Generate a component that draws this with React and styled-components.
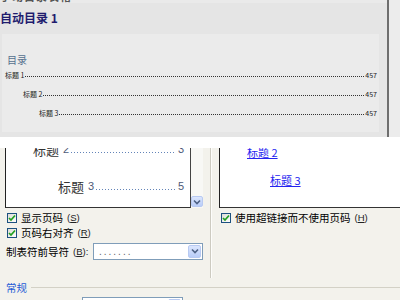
import React from "react";
import styled, { createGlobalStyle } from "styled-components";

const GlobalStyle = createGlobalStyle`
  *, *::before, *::after { box-sizing: border-box; }
  html, body { margin: 0; padding: 0; }
  body {
    width: 400px;
    height: 300px;
    overflow: hidden;
    background: #f3f2ec;
    font-family: "Noto Sans CJK SC", "Noto Sans", sans-serif;
  }
`;

//Gallery (top)
const TopPanel = styled.div`
  display: flex;
  height: 137px;
  background: #e5e5e5;
`;

const Gallery = styled.div`
  display: flex;
  flex-direction: column;
  width: 387px;
`;

const CutHeader = styled.div`
  height: 3px;
  overflow: hidden;
  background: #eaeaea;

  span {
    display: block;
    margin-top: -10px;
    font-size: 11px;
    line-height: 13px;
    font-weight: bold;
    letter-spacing: 1px;
    color: #555;
  }
`;

const GalleryTitle = styled.div`
  height: 31px;
  padding-top: 7px;
  font-size: 12px;
  line-height: 16px;
  font-weight: bold;
  color: #1f1c6e;
`;

const Preview = styled.div`
  width: 377px;
  height: 98px;
  margin-left: 2px;
  padding: 18px 2px 0 1px;
  background: #ebebeb;
`;

const PreviewHeading = styled.div`
  margin: 0 0 -2px 4px;
  font-size: 10px;
  line-height: 15px;
  color: #56708f;
`;

const PreviewEntry = styled.div`
  display: flex;
  align-items: center;
  height: 19px;
  padding-left: ${(p) => p.$indent}px;
  font-size: 7px;
  color: #222;
`;

const PreviewLeader = styled.span`
  flex: 1;
  margin: 4px 1px 0;
  border-bottom: 1px dotted #333;
`;

const Divider = styled.div`
  width: 2px;
  background: #6e6e6e;
`;

const RightStrip = styled.div`
  flex: 1;
  background: #ececec;
`;

const WhiteStrip = styled.div`
  height: 11px;
  background: #fff;
`;

//Dialog (bottom)
const Dialog = styled.div`
  background: #f3f2ec;
  font-size: 10.5px;
  color: #000;
`;

const GroupsRow = styled.div`
  display: flex;
  height: 130px;
`;

const LeftGroup = styled.div`
  width: 210px;
  padding-left: 5px;
`;

const ListRow = styled.div`
  display: flex;
  height: 60px;
`;

const ListBox = styled.div`
  width: 186px;
  height: 60px;
  overflow: hidden;
  background: #fff;
  border-left: 1px solid #222;
  border-right: 1px solid #444;
  border-bottom: 1px solid #333;
`;

const TocEntries = styled.div`
  display: flex;
  flex-direction: column;
  gap: 19px;
  margin-top: -8px;
  padding-right: 6px;
`;

const TocEntry = styled.div`
  display: flex;
  align-items: center;
  height: 18px;
  padding-left: ${(p) => p.$indent}px;
  font-size: 13px;
  color: #333;
`;

const TocNum = styled.span`
  font-family: "Liberation Sans", "DejaVu Sans", sans-serif;
  font-size: 11px;
  color: #4e5a78;
  margin-left: ${(p) => (p.$gap ? "4px" : "0")};
`;

const TocLeader = styled.span`
  flex: 1;
  height: 1px;
  margin: 7px 2px 0;
  background: repeating-linear-gradient(
    to right,
    #6384b8 0 1px,
    transparent 1px 3px
  );
`;

const ScrollBar = styled.div`
  display: flex;
  flex-direction: column;
  justify-content: flex-end;
  width: 12px;
  background: #f8f8f5;
`;

const ScrollButton = styled.div`
  display: flex;
  align-items: center;
  justify-content: center;
  width: ${(p) => p.$w || 12}px;
  height: ${(p) => p.$h || 11}px;
  margin-bottom: 1px;
  border: 1px solid #b8caf2;
  border-radius: 2px;
  background: linear-gradient(#dbe6fe, #b9cdf8);
  flex-shrink: 0;
`;

const CheckRow = styled.div`
  display: flex;
  align-items: center;
  height: 15px;
  padding-left: 2px;
  margin-top: ${(p) => p.$top || 0}px;
`;

const CheckBox = styled.span`
  display: flex;
  align-items: center;
  justify-content: center;
  width: 10px;
  height: 10px;
  margin-right: 4px;
  border: 1px solid #1c5180;
  background: linear-gradient(135deg, #dcdcd5, #fff);
  flex-shrink: 0;
`;

const Key = styled.span`
  margin-left: 4px;
  font-family: "Liberation Sans", "DejaVu Sans", sans-serif;
  font-size: 9.5px;
  color: #222;
`;

const LeaderRow = styled.div`
  display: flex;
  align-items: center;
  height: 17px;
  margin-top: 3px;
  padding-left: 1px;
`;

const Select = styled.div`
  display: flex;
  align-items: center;
  width: ${(p) => p.$w}px;
  height: ${(p) => p.$h || 17}px;
  margin-left: ${(p) => (p.$auto ? "auto" : "0")};
  margin-right: ${(p) => p.$right || 0}px;
  padding: 1px;
  border: 1px solid #7f9db9;
  background: #fff;
`;

const SelectDots = styled.span`
  flex: 1;
  padding-left: 4px;
  font-family: "Liberation Sans", sans-serif;
  font-size: 10px;
  letter-spacing: 2px;
  color: #666;
  line-height: 10px;
`;

const Separator = styled.div`
  width: 2px;
  border-left: 1px solid #cdcbc1;
  border-right: 1px solid #fdfdfb;
`;

const RightGroup = styled.div`
  flex: 1;
  padding-left: 7px;
`;

const WebBox = styled.div`
  height: 60px;
  overflow: hidden;
  background: #fff;
  border-left: 1px solid #222;
  border-bottom: 1px solid #333;
`;

const WebLinks = styled.div`
  display: flex;
  flex-direction: column;
  gap: 12px;
  margin-top: -4px;
`;

const WebLink = styled.a`
  padding-left: ${(p) => p.$indent}px;
  font-size: 11px;
  line-height: 16px;
  color: #2424f0;
  text-decoration: underline;
`;

const GeneralHeader = styled.div`
  display: flex;
  align-items: center;
  height: 19px;
  padding-left: 6px;
`;

const GeneralLabel = styled.span`
  color: #1f5bd6;
`;

const Rule = styled.span`
  flex: 1;
  height: 1px;
  margin-left: 4px;
  background: #d3d1c6;
`;

const FormatRow = styled.div`
  padding-left: 82px;
`;

const Check = () => (
  <CheckBox>
    <svg width="8" height="8" viewBox="0 0 8 8">
      <path d="M1 4 L3 6 L7 1.5" fill="none" stroke="#21a121" strokeWidth="1.7" />
    </svg>
  </CheckBox>
);

const Chevron = () => (
  <svg width="8" height="6" viewBox="0 0 8 6">
    <path d="M1 1.5 L4 4.5 L7 1.5" fill="none" stroke="#4d6185" strokeWidth="1.6" />
  </svg>
);

const previewEntries = [
  { label: "标题 1", indent: 2 },
  { label: "标题 2", indent: 20 },
  { label: "标题 3", indent: 36 },
];

const App = () => {
  return (
    <>
      <GlobalStyle />
      <TopPanel>
        <Gallery>
          <CutHeader>
            <span>手动目录表格 ▪</span>
          </CutHeader>
          <GalleryTitle>自动目录 1</GalleryTitle>
          <Preview>
            <PreviewHeading>目录</PreviewHeading>
            {previewEntries.map((e) => (
              <PreviewEntry key={e.label} $indent={e.indent}>
                {e.label}
                <PreviewLeader />
                457
              </PreviewEntry>
            ))}
          </Preview>
        </Gallery>
        <Divider />
        <RightStrip />
      </TopPanel>
      <WhiteStrip />

      <Dialog>
        <GroupsRow>
          <LeftGroup>
            <ListRow>
              <ListBox>
                <TocEntries>
                  <TocEntry $indent={27}>
                    标题<TocNum $gap>2</TocNum>
                    <TocLeader />
                    <TocNum>3</TocNum>
                  </TocEntry>
                  <TocEntry $indent={52}>
                    标题<TocNum $gap>3</TocNum>
                    <TocLeader />
                    <TocNum>5</TocNum>
                  </TocEntry>
                </TocEntries>
              </ListBox>
              <ScrollBar>
                <ScrollButton>
                  <Chevron />
                </ScrollButton>
              </ScrollBar>
            </ListRow>
            <CheckRow $top={2}>
              <Check />
              显示页码
              <Key>
                (<u>S</u>)
              </Key>
            </CheckRow>
            <CheckRow>
              <Check />
              页码右对齐
              <Key>
                (<u>R</u>)
              </Key>
            </CheckRow>
            <LeaderRow>
              制表符前导符
              <Key>
                (<u>B</u>):
              </Key>
              <Select $w={110} $auto $right={7}>
                <SelectDots>.......</SelectDots>
                <ScrollButton $w={13} $h={13}>
                  <Chevron />
                </ScrollButton>
              </Select>
            </LeaderRow>
          </LeftGroup>
          <Separator />
          <RightGroup>
            <WebBox>
              <WebLinks>
                <WebLink $indent={27}>标题 2</WebLink>
                <WebLink $indent={50}>标题 3</WebLink>
              </WebLinks>
            </WebBox>
            <CheckRow $top={2}>
              <Check />
              使用超链接而不使用页码
              <Key>
                (<u>H</u>)
              </Key>
            </CheckRow>
          </RightGroup>
        </GroupsRow>
        <GeneralHeader>
          <GeneralLabel>常规</GeneralLabel>
          <Rule />
        </GeneralHeader>
        <FormatRow>
          <Select $w={101} $h={20}>
            <SelectDots />
            <ScrollButton $w={13} $h={16}>
              <Chevron />
            </ScrollButton>
          </Select>
        </FormatRow>
      </Dialog>
    </>
  );
};

export default App;
